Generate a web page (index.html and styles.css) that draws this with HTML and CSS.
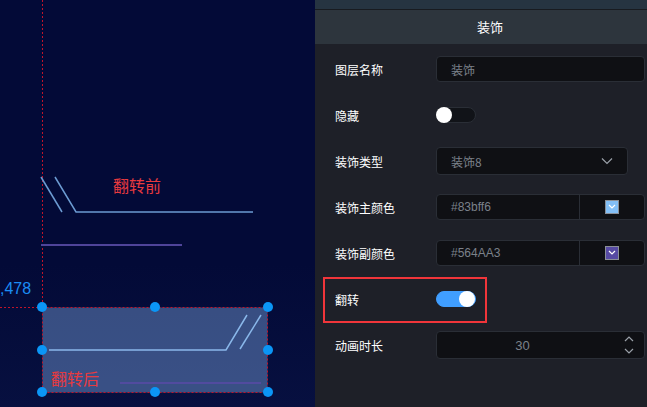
FILE: index.html
```html
<!DOCTYPE html>
<html lang="zh-CN">
<head>
    <meta charset="UTF-8">
    <title>装饰</title>
    <link rel="stylesheet" href="styles.css">
</head>
<body>
    <div class="editor">
        <!-- canvas area -->
        <div class="canvas">
            <svg class="canvas-art" width="315" height="407" viewBox="0 0 315 407">
                <!-- guide lines -->
                <line x1="42.5" y1="0" x2="42.5" y2="307" stroke="#c0142a" stroke-width="1" stroke-dasharray="2 2"/>
                <line x1="0" y1="307.5" x2="42" y2="307.5" stroke="#c0142a" stroke-width="1" stroke-dasharray="2 2"/>

                <!-- decoration before flip -->
                <line x1="41" y1="177" x2="62" y2="212" stroke="#6c9bd2" stroke-width="1.5"/>
                <polyline points="55,177 76,212 253,212" fill="none" stroke="#6c9bd2" stroke-width="1.5"/>
                <line x1="41" y1="245" x2="182" y2="245" stroke="#4f449a" stroke-width="2"/>

                <!-- selected decoration after flip -->
                <rect x="42.5" y="307.5" width="225" height="85" fill="rgba(120,160,220,0.45)" stroke="#c0142a" stroke-dasharray="2 2"/>
                <polyline points="49,350 226,350 247,315" fill="none" stroke="#8ab8ea" stroke-width="1.5"/>
                <line x1="240" y1="349" x2="261" y2="315" stroke="#8ab8ea" stroke-width="1.5"/>
                <line x1="120" y1="383" x2="261" y2="383" stroke="#5a4aa8" stroke-width="1.5"/>

                <!-- resize handles -->
                <g fill="#0b96f6">
                    <circle cx="42" cy="307" r="5"/>
                    <circle cx="155" cy="307" r="5"/>
                    <circle cx="268" cy="307" r="5"/>
                    <circle cx="42" cy="350" r="5"/>
                    <circle cx="268" cy="350" r="5"/>
                    <circle cx="42" cy="392" r="5"/>
                    <circle cx="155" cy="392" r="5"/>
                    <circle cx="268" cy="392" r="5"/>
                </g>
            </svg>
            <span class="canvas-label label-before">翻转前</span>
            <span class="canvas-label label-after">翻转后</span>
            <span class="coord">,478</span>
        </div>

        <!-- settings panel -->
        <div class="panel">
            <div class="panel-top"></div>
            <div class="panel-title">装饰</div>

            <div class="form">
                <div class="form-row">
                    <label>图层名称</label>
                    <div class="field">装饰</div>
                </div>

                <div class="form-row">
                    <label>隐藏</label>
                    <div class="switch"><span class="knob"></span></div>
                </div>

                <div class="form-row">
                    <label>装饰类型</label>
                    <div class="field select">
                        <span>装饰8</span>
                        <svg width="12" height="8" viewBox="0 0 12 8"><polyline points="1,1.5 6,6.5 11,1.5" fill="none" stroke="#9aa0a8" stroke-width="1.2"/></svg>
                    </div>
                </div>

                <div class="form-row">
                    <label>装饰主颜色</label>
                    <div class="field color">
                        <span class="color-text">#83bff6</span>
                        <span class="color-pick">
                            <span class="swatch" style="background:#83bff6">
                                <svg width="8" height="6" viewBox="0 0 8 6"><polyline points="1,1 4,4 7,1" fill="none" stroke="#fff" stroke-width="1.2"/></svg>
                            </span>
                        </span>
                    </div>
                </div>

                <div class="form-row">
                    <label>装饰副颜色</label>
                    <div class="field color">
                        <span class="color-text">#564AA3</span>
                        <span class="color-pick">
                            <span class="swatch" style="background:#564AA3">
                                <svg width="8" height="6" viewBox="0 0 8 6"><polyline points="1,1 4,4 7,1" fill="none" stroke="#fff" stroke-width="1.2"/></svg>
                            </span>
                        </span>
                    </div>
                </div>

                <div class="form-row highlighted">
                    <label>翻转</label>
                    <div class="switch on"><span class="knob"></span></div>
                </div>

                <div class="form-row">
                    <label>动画时长</label>
                    <div class="field number">
                        <span class="number-value">30</span>
                        <span class="spinner">
                            <svg width="10" height="20" viewBox="0 0 10 20">
                                <polyline points="1,6 5,2 9,6" fill="none" stroke="#9aa0a8" stroke-width="1.2"/>
                                <polyline points="1,14 5,18 9,14" fill="none" stroke="#9aa0a8" stroke-width="1.2"/>
                            </svg>
                        </span>
                    </div>
                </div>
            </div>
        </div>
    </div>
</body>
</html>
```

FILE: styles.css
```css
body {
    margin: 0;
    padding: 0;
    font-family: "Noto Sans CJK SC", "Liberation Sans", sans-serif;
    background-color: #1e2028;
    overflow: hidden;
}

.editor {
    display: flex;
    width: 647px;
    height: 407px;
}

/* canvas */

.canvas {
    position: relative;
    width: 315px;
    height: 407px;
    flex-shrink: 0;
    background: linear-gradient(180deg, #030a37 0%, #030a37 65%, #071040 100%);
    overflow: hidden;
}

.canvas-art {
    position: absolute;
    left: 0;
    top: 0;
}

.canvas-label {
    position: absolute;
    font-size: 16px;
    line-height: 20px;
    color: #e83a3f;
}

.label-before {
    left: 113px;
    top: 175px;
}

.label-after {
    left: 51px;
    top: 368px;
}

.coord {
    position: absolute;
    left: 0;
    top: 279px;
    font-family: "Liberation Sans", sans-serif;
    font-size: 16px;
    line-height: 20px;
    color: #1b8df5;
}

/* panel */

.panel {
    width: 332px;
    display: flex;
    flex-direction: column;
    background-color: #1e2028;
}

.panel-top {
    height: 9px;
    background-color: #263441;
    border-bottom: 1px solid #181b20;
}

.panel-title {
    height: 34px;
    line-height: 34px;
    background-color: #2d353d;
    color: #ffffff;
    font-size: 13px;
    text-align: center;
    padding-left: 18px;
}

.form {
    padding-top: 2px;
}

.form-row {
    position: relative;
    height: 46px;
    display: flex;
    align-items: center;
    padding-left: 20px;
}

.form-row label {
    width: 101px;
    color: #ffffff;
    font-size: 12px;
}

.form-row.highlighted::after {
    content: "";
    position: absolute;
    left: 8px;
    top: 1px;
    width: 160px;
    height: 42px;
    border: 2px solid #f0353a;
}

.field {
    flex: 1;
    height: 26px;
    margin-right: 2px;
    box-sizing: border-box;
    display: flex;
    align-items: center;
    padding-left: 14px;
    background-color: #0f1014;
    border: 1px solid #2a2e36;
    border-radius: 4px;
    color: #7b818a;
    font-size: 12px;
}

.field.select {
    flex: none;
    width: 192px;
    height: 28px;
    justify-content: space-between;
    padding-right: 14px;
}

.field.color {
    padding-left: 0;
}

.color-text {
    flex: 1;
    padding-left: 14px;
    font-family: "Liberation Sans", sans-serif;
}

.color-pick {
    width: 64px;
    height: 100%;
    display: flex;
    align-items: center;
    justify-content: center;
    border-left: 1px solid #2a2e36;
}

.swatch {
    width: 14px;
    height: 14px;
    box-sizing: border-box;
    border: 1px solid #8a8f96;
    display: flex;
    align-items: center;
    justify-content: center;
}

.field.number {
    padding-left: 0;
    height: 28px;
}

.number-value {
    flex: 1;
    text-align: center;
    font-family: "Liberation Sans", sans-serif;
    font-size: 13px;
    padding-right: 6px;
}

.spinner {
    width: 30px;
    display: flex;
    justify-content: center;
}

/* switch */

.switch {
    position: relative;
    width: 40px;
    height: 16px;
    box-sizing: border-box;
    border: 1px solid #2a2e36;
    border-radius: 8px;
    background-color: #111318;
}

.switch .knob {
    position: absolute;
    left: -1px;
    top: -1px;
    width: 16px;
    height: 16px;
    border-radius: 50%;
    background-color: #ffffff;
}

.switch.on {
    background-color: #409eff;
    border-color: #409eff;
}

.switch.on .knob {
    left: auto;
    right: 0;
}
```
